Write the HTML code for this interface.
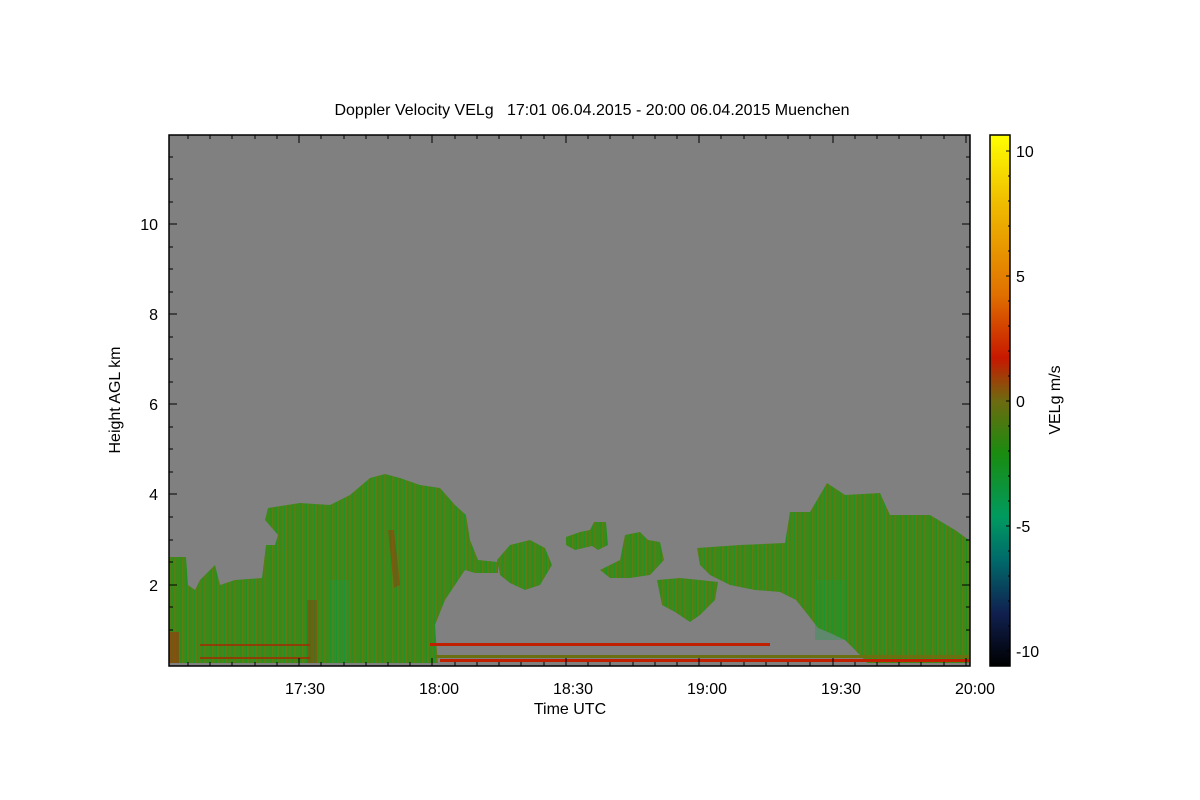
<!DOCTYPE html>
<html><head><meta charset="utf-8"><style>
html,body{margin:0;padding:0;background:#fff;width:1200px;height:800px;overflow:hidden}
svg{display:block}
text{font-family:"Liberation Sans",sans-serif;fill:#000}
</style></head><body>
<svg width="1200" height="800" viewBox="0 0 1200 800" xmlns="http://www.w3.org/2000/svg">
<defs>
<pattern id="cl" x="0" y="0" width="30" height="531" patternUnits="userSpaceOnUse">
<rect width="30" height="531" fill="#468616"/>
<rect x="0" width="2" height="531" fill="#2f8c1c"/>
<rect x="2" width="1" height="531" fill="#5c7e14"/>
<rect x="3" width="3" height="531" fill="#3e8818"/>
<rect x="6" width="1" height="531" fill="#238f22"/>
<rect x="7" width="2" height="531" fill="#587e14"/>
<rect x="9" width="2" height="531" fill="#348a1a"/>
<rect x="11" width="3" height="531" fill="#4e8216"/>
<rect x="14" width="1" height="531" fill="#1f922a"/>
<rect x="15" width="2" height="531" fill="#637a12"/>
<rect x="17" width="2" height="531" fill="#3a8818"/>
<rect x="19" width="2" height="531" fill="#528016"/>
<rect x="21" width="3" height="531" fill="#2a8e20"/>
<rect x="24" width="2" height="531" fill="#5a7c14"/>
<rect x="26" width="4" height="531" fill="#3c8818"/>
</pattern>
<linearGradient id="cb" x1="0" y1="0" x2="0" y2="1">
<stop offset="0" stop-color="#ffff00"/>
<stop offset="0.12" stop-color="#f0c000"/>
<stop offset="0.3" stop-color="#e07000"/>
<stop offset="0.42" stop-color="#c81800"/>
<stop offset="0.5" stop-color="#6e6a10"/>
<stop offset="0.6" stop-color="#1a8c10"/>
<stop offset="0.72" stop-color="#009a60"/>
<stop offset="0.8" stop-color="#006a6a"/>
<stop offset="0.9" stop-color="#102050"/>
<stop offset="1" stop-color="#000000"/>
</linearGradient>
<clipPath id="pc"><rect x="169" y="135" width="801" height="531"/></clipPath>
</defs>
<text x="592" y="115" font-size="16" text-anchor="middle" style="white-space:pre">Doppler Velocity VELg   17:01 06.04.2015 - 20:00 06.04.2015 Muenchen</text>
<rect x="169" y="135" width="801" height="531" fill="#808080"/>
<g clip-path="url(#pc)" fill="url(#cl)">
<polygon points="169,557 186,557 188,585 195,590 200,580 205,575 215,565 220,585 235,580 262,578 266,545 275,545 278,535 265,520 268,508 300,503 330,505 350,495 370,478 385,474 400,478 420,485 440,488 455,505 466,515 470,540 478,560 498,562 498,573 475,573 465,570 455,585 445,600 435,625 438,666 169,666"/>
<polygon points="497,560 510,545 530,540 545,548 552,565 540,585 525,590 510,583 500,575"/>
<polygon points="566,537 580,532 590,530 594,522 606,522 608,545 598,550 592,546 575,550 566,545"/>
<polygon points="600,570 620,560 625,535 640,532 648,540 660,542 664,560 650,575 630,578 610,578"/>
<polygon points="657,580 680,578 700,580 718,582 715,600 700,615 690,622 675,612 662,605"/>
<polygon points="697,548 740,545 785,543 790,512 810,512 827,483 845,495 880,493 890,515 930,515 955,530 969,540 969,666 870,666 855,650 845,640 830,633 818,628 808,615 796,600 780,592 755,590 730,585 710,575 700,565"/>
</g>
<g clip-path="url(#pc)">
<rect x="307" y="600" width="10" height="65" fill="#a02a08" opacity="0.35"/>
<polygon points="388,530 394,530 400,585 394,588" fill="#a83008" opacity="0.45"/>
<rect x="330" y="580" width="20" height="86" fill="#10a050" opacity="0.3"/>
<rect x="815" y="580" width="30" height="60" fill="#10a040" opacity="0.3"/>
<rect x="169" y="632" width="10" height="34" fill="#c01a08" opacity="0.45"/>
<rect x="430" y="643" width="340" height="3" fill="#c02000"/>
<rect x="435" y="655" width="534" height="3" fill="#6a7010"/>
<rect x="440" y="659" width="529" height="3" fill="#c02000"/>
<rect x="169" y="663" width="801" height="3" fill="#808080"/>
<rect x="200" y="644" width="110" height="2" fill="#b02000" opacity="0.7"/>
<rect x="200" y="657" width="110" height="2" fill="#b02000" opacity="0.7"/>
</g>
<rect x="169" y="135" width="801" height="531" fill="none" stroke="#000" stroke-width="1.5"/>
<g stroke="#000" stroke-width="1">
<path d="M169,585h8M169,494h8M169,404h8M169,314h8M169,224h8M970,585h-8M970,494h-8M970,404h-8M970,314h-8M970,224h-8"/>
<path d="M169,630h4M169,607h4M169,562h4M169,540h4M169,517h4M169,472h4M169,449h4M169,427h4M169,382h4M169,359h4M169,337h4M169,292h4M169,269h4M169,247h4M169,202h4M169,179h4M169,157h4"/>
<path d="M970,630h-4M970,607h-4M970,562h-4M970,540h-4M970,517h-4M970,472h-4M970,449h-4M970,427h-4M970,382h-4M970,359h-4M970,337h-4M970,292h-4M970,269h-4M970,247h-4M970,202h-4M970,179h-4M970,157h-4"/>
<path d="M299,666v-8M432,666v-8M566,666v-8M699,666v-8M833,666v-8M966,666v-8M299,135v8M432,135v8M566,135v8M699,135v8M833,135v8M966,135v8"/>
<path d="M188,666v-4M210,666v-4M232,666v-4M255,666v-4M277,666v-4M321,666v-4M344,666v-4M366,666v-4M388,666v-4M410,666v-4M455,666v-4M477,666v-4M499,666v-4M521,666v-4M544,666v-4M588,666v-4M610,666v-4M633,666v-4M655,666v-4M677,666v-4M721,666v-4M744,666v-4M766,666v-4M788,666v-4M810,666v-4M855,666v-4M877,666v-4M899,666v-4M921,666v-4M944,666v-4"/>
<path d="M188,135v4M210,135v4M232,135v4M255,135v4M277,135v4M321,135v4M344,135v4M366,135v4M388,135v4M410,135v4M455,135v4M477,135v4M499,135v4M521,135v4M544,135v4M588,135v4M610,135v4M633,135v4M655,135v4M677,135v4M721,135v4M744,135v4M766,135v4M788,135v4M810,135v4M855,135v4M877,135v4M899,135v4M921,135v4M944,135v4"/>
</g>
<g font-size="16" text-anchor="end">
<text x="158" y="591">2</text><text x="158" y="500">4</text><text x="158" y="410">6</text><text x="158" y="320">8</text><text x="158" y="230">10</text>
</g>
<g font-size="16" text-anchor="middle">
<text x="305" y="694">17:30</text><text x="439" y="694">18:00</text><text x="573" y="694">18:30</text><text x="707" y="694">19:00</text><text x="841" y="694">19:30</text><text x="975" y="694">20:00</text>
<text x="570" y="714">Time UTC</text>
</g>
<text transform="translate(120,400) rotate(-90)" font-size="16" text-anchor="middle">Height AGL km</text>
<rect x="990" y="135" width="20" height="531" fill="url(#cb)" stroke="#000" stroke-width="1.5"/>
<g stroke="#000"><path d="M1010,151h-4M1010,276h-4M1010,401h-4M1010,526h-4M1010,651h-4M1010,176h-2M1010,201h-2M1010,226h-2M1010,251h-2M1010,301h-2M1010,326h-2M1010,351h-2M1010,376h-2M1010,426h-2M1010,451h-2M1010,476h-2M1010,501h-2M1010,551h-2M1010,576h-2M1010,601h-2M1010,626h-2"/></g>
<g font-size="16">
<text x="1016" y="157">10</text><text x="1016" y="282">5</text><text x="1016" y="407">0</text><text x="1016" y="532">-5</text><text x="1016" y="657">-10</text>
</g>
<text transform="translate(1060,400) rotate(-90)" font-size="16" text-anchor="middle">VELg m/s</text>
</svg>
</body></html>
